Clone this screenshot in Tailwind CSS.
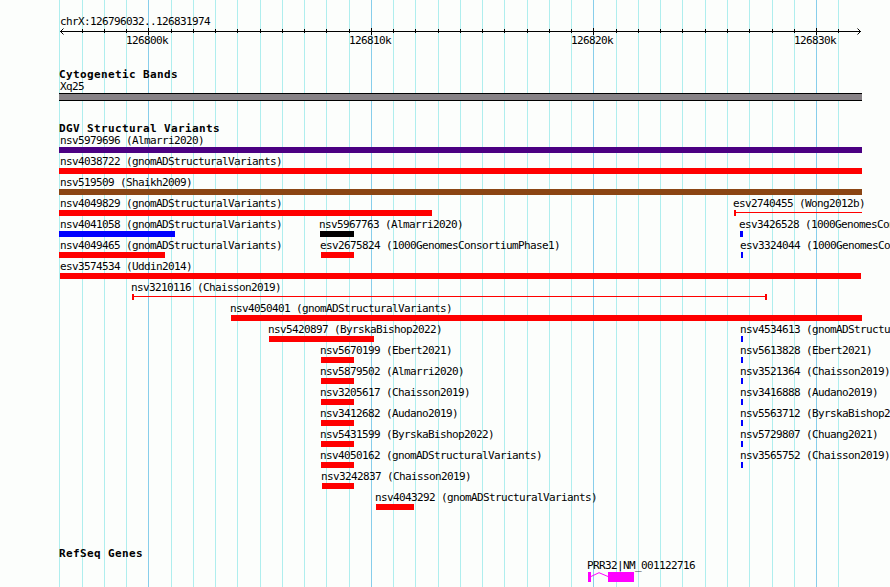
<!DOCTYPE html>
<html lang="en">
  <head>
    <meta charset="UTF-8" />
    <meta name="viewport" content="width=device-width, initial-scale=1.0" />
    <title>chrX:126796032..126831974</title>
    <script src="https://cdn.jsdelivr.net/npm/@tailwindcss/browser@4"></script>
  </head>
  <body class="bg-[#fcfefc] overflow-hidden">
    <div class="relative w-[890px] h-[587px] overflow-hidden pt-[15px] font-['DejaVu_Sans_Mono',monospace] text-[11px] leading-[13px] tracking-[-0.622px] text-black whitespace-nowrap">
      <!-- Grid lines behind the tracks -->
      <svg id="grid-lines" class="absolute left-0 top-0" width="890" height="587" shape-rendering="crispEdges"></svg>

      <div class="relative">
        <!-- Scale -->
        <div class="pl-[60px]">chrX:126796032..126831974</div>
        <svg id="ruler" class="block" width="890" height="7" fill="none" stroke="#000">
          <path d="M60 3.5H861" shape-rendering="crispEdges" />
          <path d="M63.5 0.5L60.5 3.5L63.5 6.5M857.5 0.5L860.5 3.5L857.5 6.5" />
        </svg>
        <div class="grid h-[13px] -mt-px">
          <div class="col-start-1 row-start-1 ml-[126px]">126800k</div>
          <div class="col-start-1 row-start-1 ml-[349px]">126810k</div>
          <div class="col-start-1 row-start-1 ml-[571px]">126820k</div>
          <div class="col-start-1 row-start-1 ml-[794px]">126830k</div>
        </div>

        <!-- Cytogenetic bands -->
        <h2 class="mt-[21px] h-3 pl-[59px] font-bold tracking-[0.378px]">Cytogenetic Bands</h2>
        <div class="pl-[60px]">Xq25</div>
        <div class="ml-[59px] w-[803px] h-2 bg-[#878286] border-y border-black"></div>

        <!-- Structural variants -->
        <h2 class="mt-[21px] h-3 pl-[59px] font-bold tracking-[0.378px]">DGV Structural Variants</h2>
        <div id="variants"></div>

        <!-- Genes -->
        <h2 class="mt-[35px] h-3 pl-[59px] font-bold tracking-[0.378px]">RefSeq Genes</h2>
        <div class="pl-[587px]">PRR32|NM_001122716</div>
        <div class="flex pl-[588px]">
          <div class="w-[3px] h-2.5 bg-[#ff00ff]"></div>
          <svg width="17" height="10" fill="none" stroke="#ff00ff">
            <path d="M0 4.5L8 0.7L17 4.5" />
          </svg>
          <div class="w-[26px] h-2.5 bg-[#ff00ff]"></div>
        </div>
      </div>
    </div>

    <script>
      const minor = [59, 82, 104, 126, 171, 193, 215, 237, 260, 282, 304, 326, 349, 393, 415, 438, 460, 482,
        504, 527, 549, 571, 616, 638, 660, 682, 705, 727, 749, 772, 794, 838]
      const major = [148, 371, 593, 816]

      const vlines = (xs, y1, y2, color) =>
        `<path d="${xs.map((x) => `M${x + 0.5} ${y1}V${y2}`).join('')}" stroke="${color}" shape-rendering="crispEdges" />`

      document.getElementById('grid-lines').innerHTML =
        vlines(minor, 0, 587, '#afeeee') + vlines(major, 0, 587, '#87ceeb')
      document.getElementById('ruler').innerHTML +=
        vlines(minor.slice(1), 1, 5, '#000') + vlines(major, 0, 7, '#000')

      const colors = {
        red: 'bg-[#ff0000]',
        blue: 'bg-[#0000ff]',
        black: 'bg-black',
        indigo: 'bg-[#4b0082]',
        brown: 'bg-[#8b4513]',
      }

      // [label, label x, start, end, color, kind]
      const rows = [
        [['nsv5979696 (Almarri2020)', 60, 59, 862, 'indigo']],
        [['nsv4038722 (gnomADStructuralVariants)', 60, 59, 862, 'red']],
        [['nsv519509 (Shaikh2009)', 60, 59, 862, 'brown']],
        [
          ['nsv4049829 (gnomADStructuralVariants)', 60, 59, 432, 'red'],
          ['esv2740455 (Wong2012b)', 733, 734, 862, 'red', 'open'],
        ],
        [
          ['nsv4041058 (gnomADStructuralVariants)', 60, 59, 175, 'blue'],
          ['nsv5967763 (Almarri2020)', 319, 320, 354, 'black'],
          ['esv3426528 (1000GenomesConsortiumPhase3)', 739, 740, 743, 'blue'],
        ],
        [
          ['nsv4049465 (gnomADStructuralVariants)', 60, 59, 165, 'red'],
          ['esv2675824 (1000GenomesConsortiumPhase1)', 320, 321, 354, 'red'],
          ['esv3324044 (1000GenomesConsortiumPhase3)', 740, 741, 743, 'blue'],
        ],
        [['esv3574534 (Uddin2014)', 60, 60, 861, 'red']],
        [['nsv3210116 (Chaisson2019)', 131, 132, 767, 'red', 'span']],
        [['nsv4050401 (gnomADStructuralVariants)', 230, 231, 862, 'red']],
        [
          ['nsv5420897 (ByrskaBishop2022)', 268, 269, 374, 'red'],
          ['nsv4534613 (gnomADStructuralVariants)', 740, 741, 743, 'blue'],
        ],
        [
          ['nsv5670199 (Ebert2021)', 320, 321, 354, 'red'],
          ['nsv5613828 (Ebert2021)', 740, 741, 743, 'blue'],
        ],
        [
          ['nsv5879502 (Almarri2020)', 320, 321, 354, 'red'],
          ['nsv3521364 (Chaisson2019)', 740, 741, 743, 'blue'],
        ],
        [
          ['nsv3205617 (Chaisson2019)', 320, 321, 354, 'red'],
          ['nsv3416888 (Audano2019)', 740, 741, 743, 'blue'],
        ],
        [
          ['nsv3412682 (Audano2019)', 320, 321, 354, 'red'],
          ['nsv5563712 (ByrskaBishop2022)', 740, 741, 743, 'blue'],
        ],
        [
          ['nsv5431599 (ByrskaBishop2022)', 320, 321, 354, 'red'],
          ['nsv5729807 (Chuang2021)', 740, 741, 743, 'blue'],
        ],
        [
          ['nsv4050162 (gnomADStructuralVariants)', 320, 321, 354, 'red'],
          ['nsv3565752 (Chaisson2019)', 740, 741, 743, 'blue'],
        ],
        [['nsv3242837 (Chaisson2019)', 321, 322, 354, 'red']],
        [['nsv4043292 (gnomADStructuralVariants)', 375, 376, 414, 'red']],
      ]

      // thin line with end caps for spans, solid block for the rest
      function glyph(start, end, color, kind) {
        const place = `margin-left:${start}px;width:${end - start}px`
        if (!kind) return `<div class="h-1.5 ${colors[color]}" style="${place}"></div>`
        const cap = `<div class="w-0.5 h-1.5 ${colors[color]}"></div>`
        return `<div class="flex h-1.5" style="${place}">${cap}<div class="grow h-px mt-0.5 ${colors[color]}"></div>${kind === 'span' ? cap : ''}</div>`
      }

      document.getElementById('variants').innerHTML = rows
        .map((row) => `<div class="grid grid-cols-[890px] h-[21px]">${row
          .map(([label, x, start, end, color, kind]) =>
            `<div class="col-start-1 row-start-1"><div class="h-[13px]" style="margin-left:${x}px">${label}</div>${glyph(start, end, color, kind)}</div>`)
          .join('')}</div>`)
        .join('')
    </script>
  </body>
</html>
